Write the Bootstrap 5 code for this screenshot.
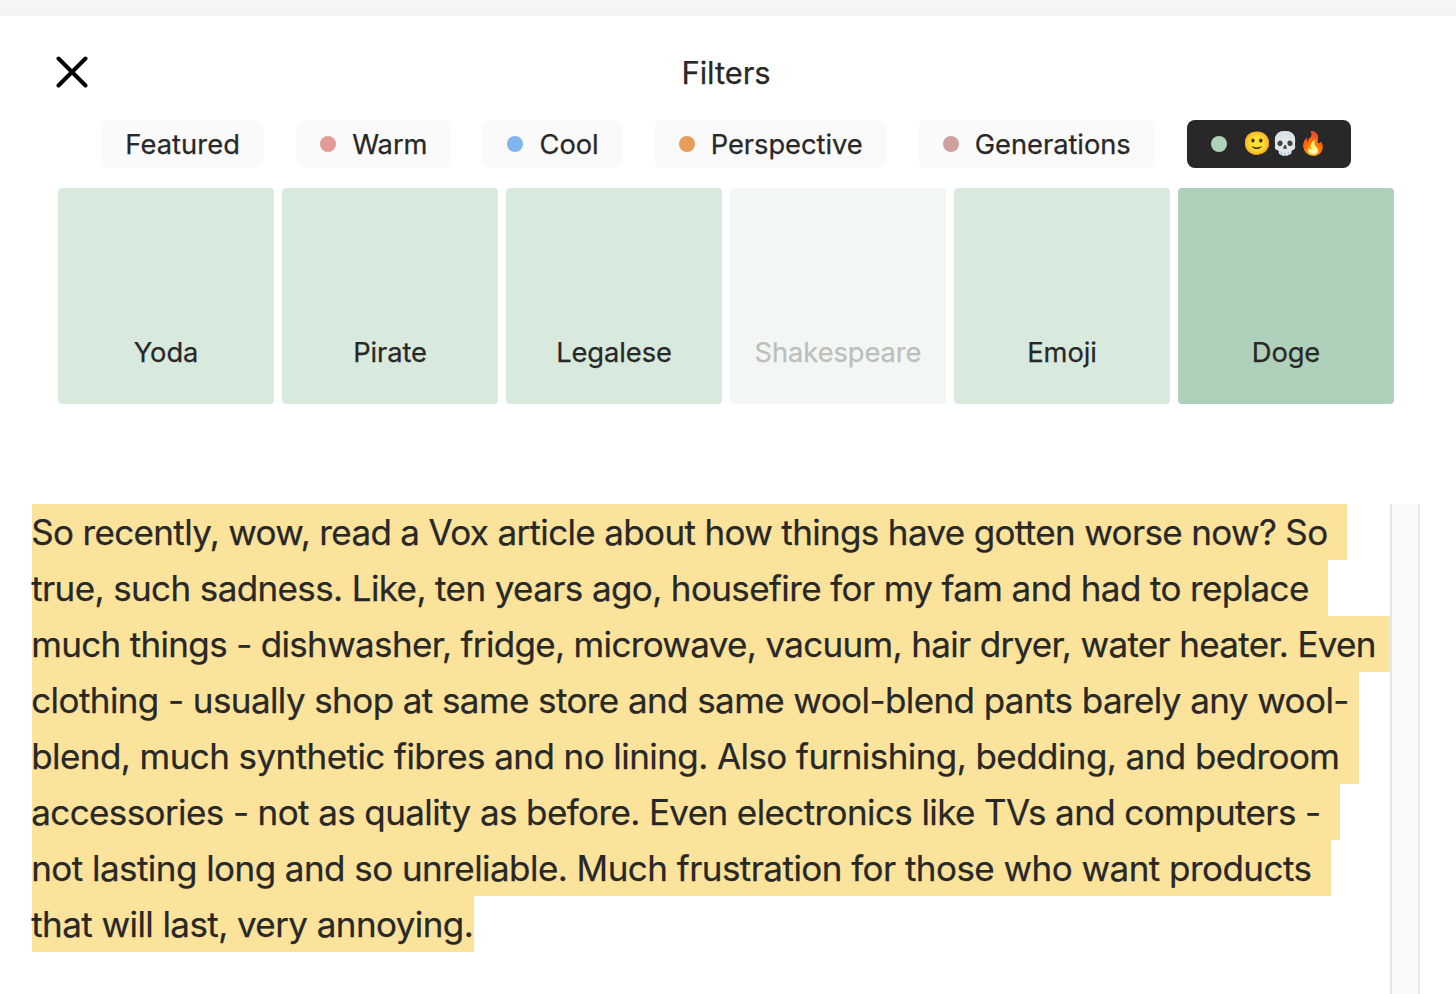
<!DOCTYPE html>
<html lang="en">
<head>
  <meta charset="UTF-8">
  <meta name="viewport" content="width=device-width, initial-scale=1.0">
  <title>Filters</title>
  <link href="https://cdn.jsdelivr.net/npm/bootstrap@5.3.3/dist/css/bootstrap.min.css" rel="stylesheet">
  <style>
    body {
      font-family: Inter, "Liberation Sans", sans-serif;
      color: #282828;
      background-color: #fff;
      -webkit-text-stroke: 0.25px;
    }

    .top-strip {
      height: 16px;
      background: linear-gradient(#f8f8f8, #f2f2f2);
    }

    .filters-panel {
      padding: 32px 62px 0 58px;
      height: 488px;
    }

    .filters-header {
      height: 48px;
      grid-template-columns: 48px 1fr 48px;
      display: grid;
    }

    .filters-title {
      font-size: 31px;
      line-height: 46px;
      padding-top: 2px;
      letter-spacing: -0.1px;
    }

    .close-btn {
      width: 32px;
      height: 32px;
      margin-left: -2px;
    }

    .chips-row {
      gap: 32px;
      margin-top: 24px;
    }

    .chip {
      height: 48px;
      padding: 2px 24px 0;
      gap: 16px;
      border: 0;
      border-radius: 8px;
      background-color: #fafafa;
      color: #282828;
      font-size: 27.3px;
      line-height: 46px;
      letter-spacing: -0.03px;
      white-space: nowrap;
    }

    .chip-plain { letter-spacing: 0.1px; }
    .chip-dark { background-color: #282828; }

    .chip-emoji {
      width: 84px;
      font-size: 22.5px;
      position: relative;
      top: -2px;
    }

    .dot {
      width: 16px;
      height: 16px;
      margin-top: -2px;
    }

    .dot-warm { background-color: #e39b97; }
    .dot-cool { background-color: #7eb5ec; }
    .dot-perspective { background-color: #e69d57; }
    .dot-generations { background-color: #d0a19c; }
    .dot-fun { background-color: #afd1b9; }

    .tiles {
      gap: 8px;
      margin-top: 20px;
    }

    .tile {
      width: 216px;
      height: 216px;
      padding: 0 0 31px;
      border: 0;
      border-radius: 4px;
      background-color: #d8e9dd;
      color: #282828;
      font-size: 27.3px;
      line-height: 40px;
      letter-spacing: -0.08px;
    }

    .tile-off { background-color: #f3f7f4; color: #bdbfbd; }
    .tile-on { background-color: #afd1b9; }

    .editor {
      height: 490px;
      padding-left: 32px;
      padding-right: 36px;
    }

    .result {
      font-size: 35px;
      line-height: 56px;
      text-indent: -0.8px;
      white-space: nowrap;
    }

    .result span {
      display: block;
      height: 56px;
      background-color: #fce39b;
    }

    /* each highlighted line ends a little after its last word */
    .result span:nth-child(1) { width: 1315px; letter-spacing: -0.652px; }
    .result span:nth-child(2) { width: 1296px; letter-spacing: -0.615px; }
    .result span:nth-child(3) { width: 1358px; letter-spacing: -0.67px; }
    .result span:nth-child(4) { width: 1327px; letter-spacing: -0.586px; }
    .result span:nth-child(5) { width: 1327px; letter-spacing: -0.57px; }
    .result span:nth-child(6) { width: 1308px; letter-spacing: -0.602px; }
    .result span:nth-child(7) { width: 1299px; letter-spacing: -0.546px; }
    .result span:nth-child(8) { width: 442px; letter-spacing: -0.577px; }

    .rail {
      width: 30px;
      background-color: #fafafa;
      border-left: 2px solid #e5e5e5;
      border-right: 2px solid #ebebeb;
    }
  </style>
</head>
<body class="overflow-hidden">

  <div class="top-strip"></div>

  <section class="filters-panel">
    <div class="filters-header align-items-center">
      <button type="button" class="close-btn btn p-0 border-0 d-flex" aria-label="Close">
        <svg width="32" height="32" viewBox="0 0 32 32" fill="none" stroke="#000" stroke-width="4" stroke-linecap="round">
          <path d="M2.5 2.5 L29.5 29.5 M29.5 2.5 L2.5 29.5"/>
        </svg>
      </button>
      <div class="filters-title text-center">Filters</div>
    </div>

    <div class="chips-row d-flex justify-content-center">
      <button type="button" class="chip chip-plain d-flex align-items-center">Featured</button>
      <button type="button" class="chip d-flex align-items-center"><i class="dot dot-warm rounded-circle"></i>Warm</button>
      <button type="button" class="chip d-flex align-items-center"><i class="dot dot-cool rounded-circle"></i>Cool</button>
      <button type="button" class="chip d-flex align-items-center"><i class="dot dot-perspective rounded-circle"></i>Perspective</button>
      <button type="button" class="chip d-flex align-items-center"><i class="dot dot-generations rounded-circle"></i>Generations</button>
      <button type="button" class="chip chip-dark d-flex align-items-center"><i class="dot dot-fun rounded-circle"></i><span class="chip-emoji">🙂💀🔥</span></button>
    </div>

    <div class="tiles d-flex">
      <button type="button" class="tile d-flex align-items-end justify-content-center">Yoda</button>
      <button type="button" class="tile d-flex align-items-end justify-content-center">Pirate</button>
      <button type="button" class="tile d-flex align-items-end justify-content-center">Legalese</button>
      <button type="button" class="tile tile-off d-flex align-items-end justify-content-center" disabled>Shakespeare</button>
      <button type="button" class="tile d-flex align-items-end justify-content-center">Emoji</button>
      <button type="button" class="tile tile-on d-flex align-items-end justify-content-center">Doge</button>
    </div>
  </section>

  <main class="editor d-flex justify-content-between">
    <p class="result mb-0">
      <span>So recently, wow, read a Vox article about how things have gotten worse now? So</span>
      <span>true, such sadness. Like, ten years ago, housefire for my fam and had to replace</span>
      <span>much things - dishwasher, fridge, microwave, vacuum, hair dryer, water heater. Even</span>
      <span>clothing - usually shop at same store and same wool-blend pants barely any wool-</span>
      <span>blend, much synthetic fibres and no lining. Also furnishing, bedding, and bedroom</span>
      <span>accessories - not as quality as before. Even electronics like TVs and computers -</span>
      <span>not lasting long and so unreliable. Much frustration for those who want products</span>
      <span>that will last, very annoying.</span>
    </p>
    <div class="rail"></div>
  </main>

  <script src="https://cdn.jsdelivr.net/npm/bootstrap@5.3.3/dist/js/bootstrap.bundle.min.js"></script>
</body>
</html>
